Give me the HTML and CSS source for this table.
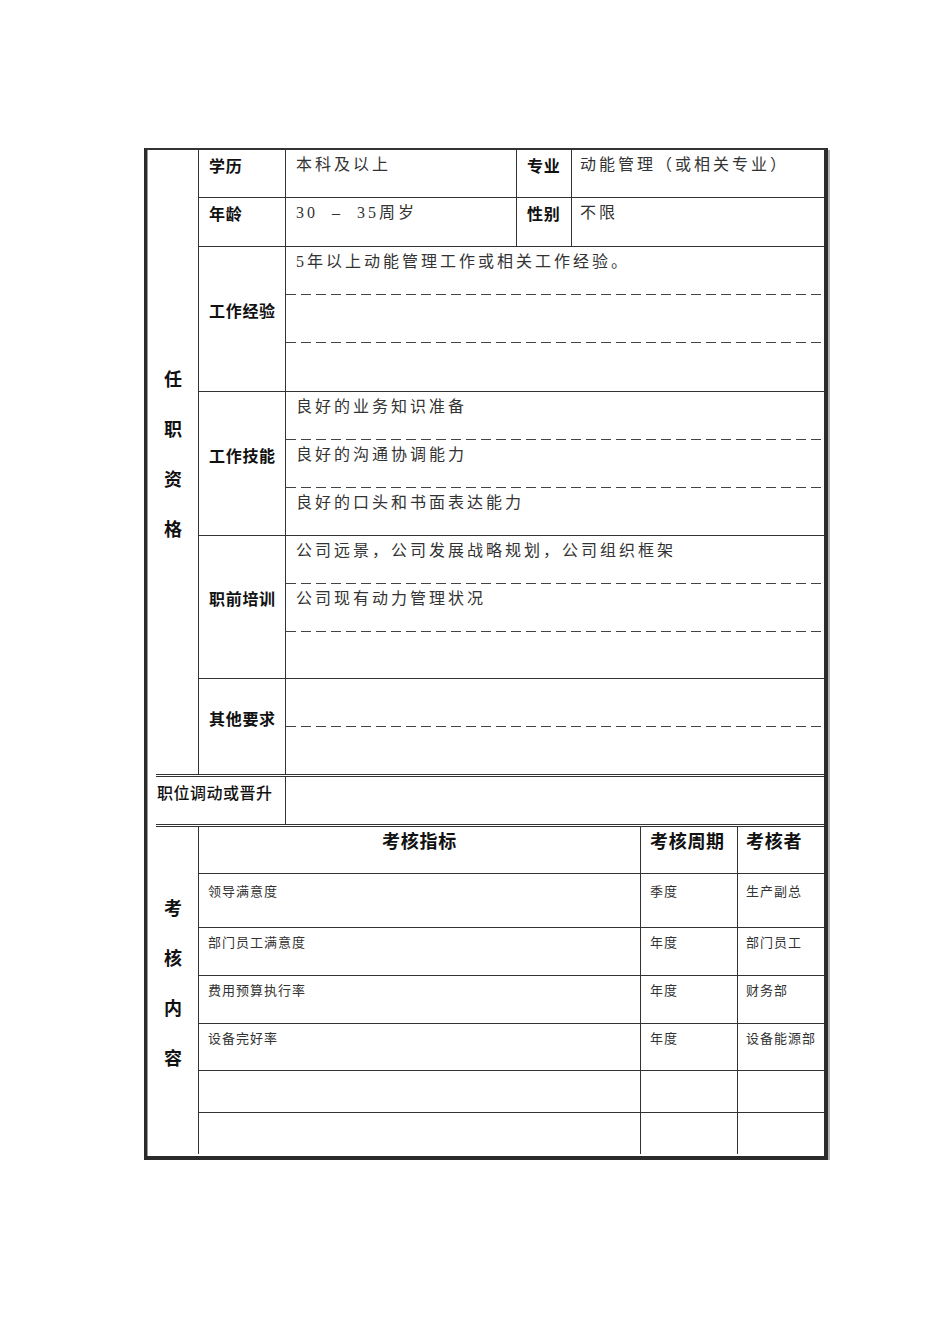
FILE: index.html
```html
<!DOCTYPE html>
<html lang="zh-CN">
<head>
<meta charset="utf-8">
<title>任职资格</title>
<link rel="stylesheet" href="styles.css">
</head>
<body>
<div class="form">
  <section class="qual">
    <div class="cat"><span>任</span><span>职</span><span>资</span><span>格</span></div>
    <div class="rows">
      <div class="row r1">
        <div class="lab">学历</div>
        <div class="val bordered">本科及以上</div>
        <div class="lab lab2">专业</div>
        <div class="val val2">动能管理（或相关专业）</div>
      </div>
      <div class="row r2">
        <div class="lab">年龄</div>
        <div class="val bordered">30 &nbsp;– &nbsp;35周岁</div>
        <div class="lab lab2">性别</div>
        <div class="val val2">不限</div>
      </div>
      <div class="row multi r3">
        <div class="lab">工作经验</div>
        <div class="lines">
          <div class="line">5年以上动能管理工作或相关工作经验。</div>
          <div class="line"></div>
          <div class="line"></div>
        </div>
      </div>
      <div class="row multi r4">
        <div class="lab">工作技能</div>
        <div class="lines">
          <div class="line">良好的业务知识准备</div>
          <div class="line">良好的沟通协调能力</div>
          <div class="line">良好的口头和书面表达能力</div>
        </div>
      </div>
      <div class="row multi r5">
        <div class="lab">职前培训</div>
        <div class="lines">
          <div class="line">公司远景，公司发展战略规划，公司组织框架</div>
          <div class="line">公司现有动力管理状况</div>
          <div class="line"></div>
        </div>
      </div>
      <div class="row multi r6">
        <div class="lab">其他要求</div>
        <div class="lines">
          <div class="line"></div>
          <div class="line"></div>
        </div>
      </div>
    </div>
  </section>
  <div class="promo">
    <div class="plab">职位调动或晋升</div>
    <div class="pval"></div>
  </div>
  <section class="eval">
    <div class="cat"><span>考</span><span>核</span><span>内</span><span>容</span></div>
    <div class="etable">
      <div class="c hd center">考核指标</div>
      <div class="c hd">考核周期</div>
      <div class="c hd">考核者</div>

      <div class="c">领导满意度</div>
      <div class="c">季度</div>
      <div class="c">生产副总</div>

      <div class="c">部门员工满意度</div>
      <div class="c">年度</div>
      <div class="c">部门员工</div>

      <div class="c">费用预算执行率</div>
      <div class="c">年度</div>
      <div class="c">财务部</div>

      <div class="c">设备完好率</div>
      <div class="c">年度</div>
      <div class="c">设备能源部</div>

      <div class="c"></div>
      <div class="c"></div>
      <div class="c"></div>

      <div class="c last"></div>
      <div class="c last"></div>
      <div class="c last"></div>
    </div>
  </section>
</div>
</body>
</html>
```

FILE: styles.css
```css
body {
  margin: 0;
  background: #fff;
  font-family: "Noto Sans CJK SC", sans-serif;
  color: #1a1a1a;
}

.form {
  width: 676px;
  margin: 148px 0 0 144px;
  border-top: 2px solid #333;
  border-left: 3px solid #2b2b2b;
  border-right: 4px solid #2b2b2b;
  border-bottom: 4px solid #2b2b2b;
  padding: 0 0 2px 1px;
  box-shadow: inset 1px 0 0 #999, 2px 2px 0 #b4b4b4;
}

/* ---------- qualification section ---------- */
.qual {
  display: flex;
  height: 624px;
}

.cat {
  width: 51px;
  flex: none;
  box-sizing: border-box;
  border-right: 1px solid #333;
  display: flex;
  flex-direction: column;
  align-items: center;
  justify-content: center;
  padding-bottom: 18px;
  font-weight: 700;
  font-size: 18px;
  color: #111;
}

.cat span {
  display: block;
  height: 50px;
  line-height: 50px;
}

.rows {
  flex: 1;
  display: flex;
  flex-direction: column;
}

.row {
  display: grid;
  grid-template-columns: 87px 231px 55px 1fr;
  border-bottom: 1px solid #333;
  box-sizing: border-box;
}

.row.multi {
  grid-template-columns: 87px 1fr;
}

.r1 { height: 48px; }
.r2 { height: 49px; }
.r3 { height: 145px; }
.r4 { height: 144px; }
.r5 { height: 143px; }
.r6 { height: 95px; border-bottom: none; }

.lab {
  box-sizing: border-box;
  border-right: 1px solid #333;
  display: flex;
  align-items: center;
  padding: 0 0 18px 10px;
  font-weight: 700;
  font-size: 16px;
  line-height: 22px;
  letter-spacing: 0.7px;
  color: #111;
}

.lab2 {
  padding-left: 10px;
}

.val,
.line {
  box-sizing: border-box;
  display: flex;
  align-items: center;
  padding: 0 0 18px 10px;
  font-family: "Liberation Serif", "Noto Sans CJK SC", serif;
  font-size: 16px;
  line-height: 22px;
  letter-spacing: 3px;
  color: #333;
  white-space: nowrap;
}

.val.bordered {
  border-right: 1px solid #333;
}

.val.val2 {
  padding-left: 8px;
}

.lines {
  display: flex;
  flex-direction: column;
}

.line {
  height: 48px;
  flex: none;
  background-image: repeating-linear-gradient(to right, #444 0 10px, transparent 10px 15px);
  background-size: 100% 1px;
  background-position: left bottom;
  background-repeat: no-repeat;
}

.line:last-child {
  flex: 1;
  height: auto;
  background: none;
}

/* ---------- promotion row ---------- */
.promo {
  display: grid;
  grid-template-columns: 130px 1fr;
  margin-left: 8px;
  height: 53px;
  box-sizing: border-box;
  border-top: 3px double #333;
  border-bottom: 3px double #333;
}

.plab {
  box-sizing: border-box;
  border-right: 1px solid #333;
  display: flex;
  align-items: center;
  padding: 0 0 18px 1px;
  font-size: 16px;
  line-height: 22px;
  letter-spacing: 0.5px;
  color: #111;
  font-weight: 500;
}

/* ---------- evaluation section ---------- */
.eval {
  display: flex;
  height: 327px;
}

.etable {
  flex: 1;
  display: grid;
  grid-template-columns: 442px 97px 1fr;
  grid-template-rows: 47px 54px 48px 48px 47px 42px 41px;
}

.c {
  box-sizing: border-box;
  border-right: 1px solid #333;
  border-bottom: 1px solid #333;
  display: flex;
  align-items: center;
  padding: 0 0 19px 9px;
  font-size: 13px;
  line-height: 18px;
  letter-spacing: 1px;
  color: #333;
  white-space: nowrap;
}

.c:nth-child(3n) {
  border-right: none;
  padding-left: 8px;
}

.c.last {
  border-bottom: none;
}

.c.hd {
  font-weight: 700;
  font-size: 18px;
  line-height: 24px;
  letter-spacing: 0.7px;
  color: #111;
  padding-bottom: 20px;
}

.c.hd.center {
  justify-content: center;
  padding-left: 0;
}
```
